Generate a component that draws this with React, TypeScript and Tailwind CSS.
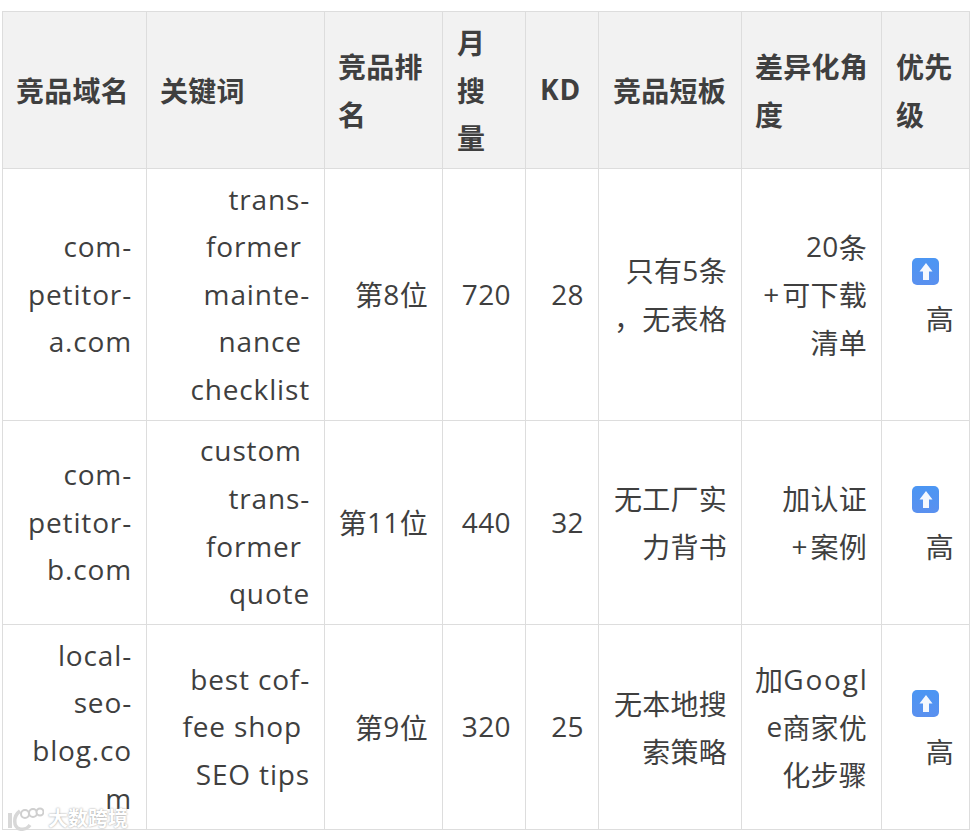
const font = '[font-family:"Open_Sans","Noto_Sans_CJK_SC",sans-serif]';

const columns = [
  { title: ['竞品域名'], width: 'w-[144px]', pad: 'pl-[13px]' },
  { title: ['关键词'], width: 'w-[178px]', pad: 'pl-[13px]' },
  { title: ['竞品排', '名'], width: 'w-[118px]', pad: 'pl-[13px]' },
  { title: ['月', '搜', '量'], width: 'w-[83px]', pad: 'pl-[14px]' },
  { title: ['KD'], width: 'w-[73px]', pad: 'pl-[14px]' },
  { title: ['竞品短板'], width: 'w-[143px]', pad: 'pl-[14px]' },
  { title: ['差异化角', '度'], width: 'w-[140px]', pad: 'pl-[13px]' },
  { title: ['优先', '级'], width: 'w-[88px]', pad: 'pl-[14px]' },
];

// trailing spaces are kept on purpose, the source wraps with them
const rows = [
  {
    cells: [
      ['com-', 'petitor-', 'a.com'],
      ['trans-', 'former ', 'mainte-', 'nance ', 'checklist'],
      ['第8位'],
      ['720'],
      ['28'],
      ['只有5条', '，无表格'],
      ['20条', '+可下载', '清单'],
    ],
    height: 'h-[252px]',
  },
  {
    cells: [
      ['com-', 'petitor-', 'b.com'],
      ['custom ', 'trans-', 'former ', 'quote'],
      ['第11位'],
      ['440'],
      ['32'],
      ['无工厂实', '力背书'],
      ['加认证', '+案例'],
    ],
    height: 'h-[204px]',
  },
  {
    cells: [
      ['local-', 'seo-', 'blog.co', 'm'],
      ['best cof-', 'fee shop ', 'SEO tips'],
      ['第9位'],
      ['320'],
      ['25'],
      ['无本地搜', '索策略'],
      ['加Googl', 'e商家优', '化步骤'],
    ],
    height: 'h-[205px]',
  },
];

// the source font sets latin wider and cjk a little lower than ours
function segmentClass(seg: string) {
  if (/[\u4e00-\u9fff，]/.test(seg)) return 'relative top-[1.5px] tracking-[0.25px]';
  if (seg === 'Googl') return 'tracking-[1.8px]';
  if (seg === '+') return 'tracking-[3px]';
  if (seg === 'e') return '';
  if (/^\d+$/.test(seg)) return 'tracking-[0.4px]';
  return 'tracking-[0.85px]';
}

function Lines({ lines }: { lines: string[] }) {
  return (
    <>
      {lines.map((line, i) => (
        <div key={i} className="whitespace-pre">
          {line.split(/([\u4e00-\u9fff，]+)/).filter(Boolean).map((seg, j) => (
            <span key={j} className={segmentClass(seg)}>
              {seg}
            </span>
          ))}
        </div>
      ))}
    </>
  );
}

function UpEmoji() {
  return (
    <svg width="27" height="27" viewBox="0 0 27 27" className="block">
      <defs>
        <linearGradient id="up" x1="0" y1="0" x2="0" y2="1">
          <stop offset="0" stopColor="#4b96f3" />
          <stop offset="1" stopColor="#5a90ef" />
        </linearGradient>
      </defs>
      <rect width="27" height="27" rx="5" fill="url(#up)" />
      <path d="M14 5 L20.5 13.5 H17 V22 H11 V13.5 H7.5 Z" fill="#f4f8fe" />
    </svg>
  );
}

function Watermark() {
  return (
    <div className="absolute left-[8px] top-[807px] flex items-center gap-[4px]">
      <svg width="36" height="24" viewBox="0 0 36 24" fill="none" stroke="#cfcfcf" strokeWidth="2">
        <path d="M2 6 V21" strokeWidth="4" stroke="#d8d8d8" />
        <path d="M12 4 C5 9 5 20 12 22 C16 23 20 21 22 18" strokeWidth="3.5" stroke="#d8d8d8" />
        <circle cx="17" cy="7" r="4" fill="#ffffff" />
        <circle cx="25" cy="6" r="4" fill="#ffffff" />
        <circle cx="32" cy="5" r="3.5" fill="#ffffff" />
      </svg>
      <span className="text-[20px] leading-[24px] font-bold text-white [text-shadow:0_0_2px_#8f8f8f]">
        大数跨境
      </span>
    </div>
  );
}

export default function App() {
  return (
    <div className={`relative w-[972px] h-[837px] overflow-hidden bg-white pt-[11px] pl-[2px] text-[#3f3f3f] ${font}`}>
      <table className="table-fixed border-collapse w-[967px] text-[28px] leading-[47.6px]">
        <colgroup>
          {columns.map((col, i) => (
            <col key={i} className={col.width} />
          ))}
        </colgroup>
        <thead>
          <tr className="h-[157px] bg-[#f2f2f2]">
            {columns.map((col, i) => (
              <th key={i} className={`border border-[#dddddd] pr-[13px] text-left font-bold align-middle ${col.pad}`}>
                <Lines lines={col.title} />
              </th>
            ))}
          </tr>
        </thead>
        <tbody>
          {rows.map((row, r) => (
            <tr key={r} className={row.height}>
              {row.cells.map((cell, c) => (
                <td key={c} className="border border-[#dddddd] pl-[13px] pr-[14px] text-right align-middle">
                  <Lines lines={cell} />
                </td>
              ))}
              <td className="border border-[#dddddd] pl-[13px] pr-[15px] text-right align-middle">
                <div className="h-[47.6px] pt-[11px] pl-[17px]">
                  <UpEmoji />
                </div>
                <Lines lines={['高']} />
              </td>
            </tr>
          ))}
        </tbody>
      </table>
      <Watermark />
    </div>
  );
}
